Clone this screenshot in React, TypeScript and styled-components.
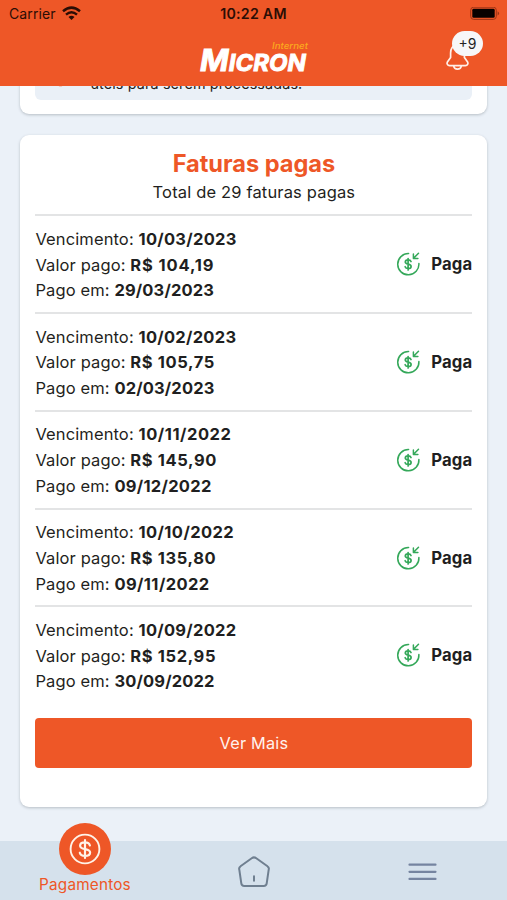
import React from "react";
import styled, { createGlobalStyle } from "styled-components";

const GlobalStyle = createGlobalStyle`
  * { box-sizing: border-box; }
  body { margin: 0; background: #ebf1f8; }
`;

const orange = "#ee5727";

const Screen = styled.div`
  width: 507px;
  height: 900px;
  display: flex;
  flex-direction: column;
  overflow: hidden;
  background: #ebf1f8;
  color: #1f1f21;
  font-family: Inter, sans-serif;
`;

const Header = styled.header`
  flex: none;
  height: 86px;
  background: ${orange};
  position: relative;
  z-index: 1;
`;

const StatusBar = styled.div`
  height: 28px;
  padding: 0 7px 0 9px;
  display: grid;
  grid-template-columns: 1fr auto 1fr;
  align-items: center;
  color: #2b0d05;
  font-size: 14px;
`;

const Carrier = styled.div`
  display: flex;
  align-items: center;
  gap: 6px;
  margin-top: -2px;
  letter-spacing: 0.1px;
`;

const Clock = styled.div`
  margin: -2px 2px 0 0;
  font-weight: 600;
  font-size: 14.2px;
  letter-spacing: 0.25px;
`;

const BatterySlot = styled.div`
  display: flex;
  justify-content: flex-end;
`;

const Brand = styled.div`
  height: 58px;
  padding: 11px 0 0 199px;
`;

const Bell = styled.div`
  position: absolute;
  left: 445px;
  top: 40px;
`;

const Badge = styled.span`
  position: absolute;
  left: 7px;
  top: -9px;
  width: 31px;
  height: 25px;
  border-radius: 13px;
  background: #f7f7f8;
  color: #222;
  display: flex;
  align-items: center;
  justify-content: center;
  font-size: 14px;
`;

const Scroll = styled.main`
  flex: 1;
  min-height: 0;
  overflow: hidden;
  padding: 0 19.6px 0 20.4px;
`;

const Card = styled.section`
  background: #fff;
  border-radius: 9px;
  box-shadow: 0 1px 3px rgba(50, 60, 70, 0.28);
`;

const NoticeCard = styled(Card)`
  height: 70px;
  margin: -42px 0 21px;
  padding: 0 15px 14px;
`;

const Notice = styled.div`
  height: 56px;
  display: flex;
  align-items: flex-end;
  gap: 20px;
  padding: 0 20px 6px;
  border-radius: 6px;
  background: #eaf0f7;
  font-size: 14.4px;
  line-height: 20px;
`;

const NoticeText = styled.span`
  letter-spacing: 0.12px;
`;

const NoticeIcon = styled.svg`
  margin: 0 2px 7px -2px;
`;

const PaidCard = styled(Card)`
  height: 672px;
  padding: 14px 15px 0;
`;

const Title = styled.h1`
  margin: 0;
  color: ${orange};
  text-align: center;
  font-size: 23.6px;
  font-weight: 700;
  line-height: 30px;
  letter-spacing: -0.03px;
`;

const Subtitle = styled.p`
  margin: 0;
  height: 35.4px;
  text-align: center;
  font-size: 16.5px;
  line-height: 26px;
  letter-spacing: 0.16px;
`;

const Invoice = styled.article`
  height: 97.75px;
  padding-top: 10.6px;
  border-top: 2px solid #e3e4e5;
  display: flex;
  justify-content: space-between;
`;

const Details = styled.div`
  font-size: 16.5px;
  line-height: 25.7px;
  letter-spacing: 0.12px;
`;

const Line = styled.div`
  white-space: nowrap;
`;

const Value = styled.strong<{ $tracking: number }>`
  font-weight: 700;
  letter-spacing: ${({ $tracking }) => $tracking}px;
`;

const Status = styled.div`
  height: 75px;
  display: flex;
  align-items: center;
  gap: 10px;
  font-size: 16.7px;
  font-weight: 700;
  letter-spacing: 0.15px;
`;

const MoreButton = styled.button`
  display: block;
  width: 100%;
  height: 50px;
  margin-top: 14.8px;
  border: 0;
  border-radius: 4px;
  background: ${orange};
  color: #fff3ee;
  font: 400 16.3px Inter, sans-serif;
  letter-spacing: 0.2px;
`;

const TabBar = styled.nav`
  flex: none;
  height: 59px;
  display: grid;
  grid-template-columns: repeat(3, 169px);
  background: #d5e1ec;
`;

const Tab = styled.div`
  display: flex;
  justify-content: center;
  align-items: center;
  padding-top: 3px;
`;

const ActiveTab = styled(Tab)`
  flex-direction: column;
  justify-content: flex-start;
  margin-top: -18px;
  padding: 0 0 0 1px;
  color: ${orange};
  font-size: 15.3px;
  line-height: 20px;
`;

const ActiveCircle = styled.div`
  width: 52px;
  height: 52px;
  flex: none;
  border-radius: 50%;
  background: ${orange};
  display: flex;
  align-items: center;
  justify-content: center;
`;

const TabLabel = styled.span`
  letter-spacing: 0.2px;
`;

const invoices = [
  { due: "10/03/2023", amount: "R$ 104,19", paid: "29/03/2023" },
  { due: "10/02/2023", amount: "R$ 105,75", paid: "02/03/2023" },
  { due: "10/11/2022", amount: "R$ 145,90", paid: "09/12/2022" },
  { due: "10/10/2022", amount: "R$ 135,80", paid: "09/11/2022" },
  { due: "10/09/2022", amount: "R$ 152,95", paid: "30/09/2022" },
];

// The digit 1 is narrow, so values that repeat it get wider tracking.
const ones = (value: string) => value.split("1").length - 1;
const dateTracking = (value: string) => 0.14 + 0.13 * ones(value);
const amountTracking = (value: string) => 0.37 + 0.25 * ones(value);

const WifiIcon = () => (
  <svg width="19" height="15" viewBox="0 0 19 15" fill="none" stroke="#2b0d05" strokeWidth="2.5">
    <path d="M1 5.2Q9.5-2 18 5.2M4 8.6Q9.5 3.9 15 8.6" />
    <path d="M6.5 11Q9.5 8.6 12.5 11L9.5 14Z" fill="#2b0d05" stroke="none" />
  </svg>
);

const BatteryIcon = () => (
  <svg width="30" height="14" viewBox="0 0 30 14">
    <rect x="0.7" y="0.2" width="25.6" height="12.2" rx="3" fill="none" stroke="#9d3416" strokeWidth="1" />
    <rect x="2.3" y="1.8" width="22.4" height="9" rx="1.4" fill="#080100" />
    <path d="M27.6 4.2q3 2.2 0 4.4z" fill="#9d3416" />
  </svg>
);

const Logo = () => (
  <svg width="112" height="38" viewBox="0 0 112 38" fontFamily="Inter, sans-serif" fontStyle="italic">
    <text x="73" y="9.500" fontSize="9" fontWeight="500" fill="#fba91d" textLength="36" lengthAdjust="spacingAndGlyphs">Internet</text>
    <text x="1" y="32" fill="#fff" stroke="#fff" strokeWidth="0.9" fontWeight="700" fontSize="30" textLength="106" lengthAdjust="spacingAndGlyphs">
      M<tspan fontSize="23.500">ICRON</tspan>
    </text>
  </svg>
);

const BellIcon = () => (
  <svg width="26" height="32" viewBox="0 0 26 32" fill="none" stroke="#fff0e8" strokeWidth="1.7" strokeLinejoin="round">
    <path d="M12.5 5C7.5 5 5.6 9 5.6 13v4.5L2.4 22c-1 1.7.2 3.6 2.1 3.6h16c1.9 0 3.1-1.9 2.1-3.6l-3.2-4.5V13c0-4-2-8-6.900-8Z" />
    <path d="M8.700 26c.6 4.200 7 4.200 7.600 0" />
  </svg>
);

const PaidIcon = () => (
  <svg width="25" height="26" viewBox="0 0 25 26" fill="none" stroke="#35a85a" strokeWidth="1.5" strokeLinecap="round" strokeLinejoin="round">
    <path d="M12.600 2.600A10.600 10.600 0 1 0 22.900 12.500" />
    <path d="M22.500 2.200 17.600 7.300M17.400 3v4.500h4.500" />
    <path d="M15 10.500c-.4-1.100-1.400-1.600-2.900-1.600-1.700 0-2.800.8-2.800 2.100 0 3 5.800 1.300 5.800 4.400 0 1.300-1.200 2.100-2.900 2.100-1.600 0-2.700-.6-3.100-1.800M12.100 7.500v11.400" strokeWidth="1.700" />
  </svg>
);

const DollarIcon = () => (
  <svg width="32" height="32" viewBox="0 0 32 32" fill="none" stroke="#fff3e8" strokeWidth="2.2" strokeLinecap="round">
    <circle cx="16" cy="16" r="14.400" strokeWidth="1.900" />
    <path d="M20.900 12.400c-.5-2-2.200-3-4.900-3-2.800 0-4.900 1.300-4.900 3.300 0 4.900 10 2.100 10 6.800 0 2-2 3.400-5.100 3.400-2.800 0-4.700-1.100-5.200-3.200M16 7.200v17.700" />
  </svg>
);

const HomeIcon = () => (
  <svg width="32" height="32" viewBox="0 0 32 32" fill="none" stroke="#6f7f90" strokeWidth="2" strokeLinecap="round" strokeLinejoin="round">
    <path d="M13.700 2.200 2.500 10.300a3 3 0 0 0-1.200 3.400l2 13.700a3 3 0 0 0 3 2.600h19.400a3 3 0 0 0 3-2.600l2-13.700a3 3 0 0 0-1.200-3.400L18.300 2.200a4 4 0 0 0-4.600 0Z" />
    <path d="M16 20.300v4.500" />
  </svg>
);

const MenuIcon = () => (
  <svg width="29" height="20" viewBox="0 0 29 20" stroke="#7584a0" strokeWidth="2.200" strokeLinecap="round">
    <path d="M1.500 2.700h26M1.500 9.800h26M1.500 16.900h26" />
  </svg>
);

export default function App() {
  return (
    <Screen>
      <GlobalStyle />
      <Header>
        <StatusBar>
          <Carrier>Carrier <WifiIcon /></Carrier>
          <Clock>10:22 AM</Clock>
          <BatterySlot><BatteryIcon /></BatterySlot>
        </StatusBar>
        <Brand><Logo /></Brand>
        <Bell><BellIcon /><Badge>+9</Badge></Bell>
      </Header>
      <Scroll>
        <NoticeCard>
          <Notice>
            <NoticeIcon width="15" height="15" viewBox="0 0 15 15">
              <circle cx="7.500" cy="7" r="6.500" fill="none" stroke={orange} strokeWidth="1.500" />
            </NoticeIcon>
            <NoticeText>úteis para serem processadas.</NoticeText>
          </Notice>
        </NoticeCard>
        <PaidCard>
          <Title>Faturas pagas</Title>
          <Subtitle>Total de 29 faturas pagas</Subtitle>
          {invoices.map((invoice) => (
            <Invoice key={invoice.due}>
              <Details>
                <Line>Vencimento: <Value $tracking={dateTracking(invoice.due)}>{invoice.due}</Value></Line>
                <Line>Valor pago: <Value $tracking={amountTracking(invoice.amount)}>{invoice.amount}</Value></Line>
                <Line>Pago em: <Value $tracking={dateTracking(invoice.paid)}>{invoice.paid}</Value></Line>
              </Details>
              <Status><PaidIcon />Paga</Status>
            </Invoice>
          ))}
          <MoreButton>Ver Mais</MoreButton>
        </PaidCard>
      </Scroll>
      <TabBar>
        <ActiveTab>
          <ActiveCircle><DollarIcon /></ActiveCircle>
          <TabLabel>Pagamentos</TabLabel>
        </ActiveTab>
        <Tab><HomeIcon /></Tab>
        <Tab><MenuIcon /></Tab>
      </TabBar>
    </Screen>
  );
}
